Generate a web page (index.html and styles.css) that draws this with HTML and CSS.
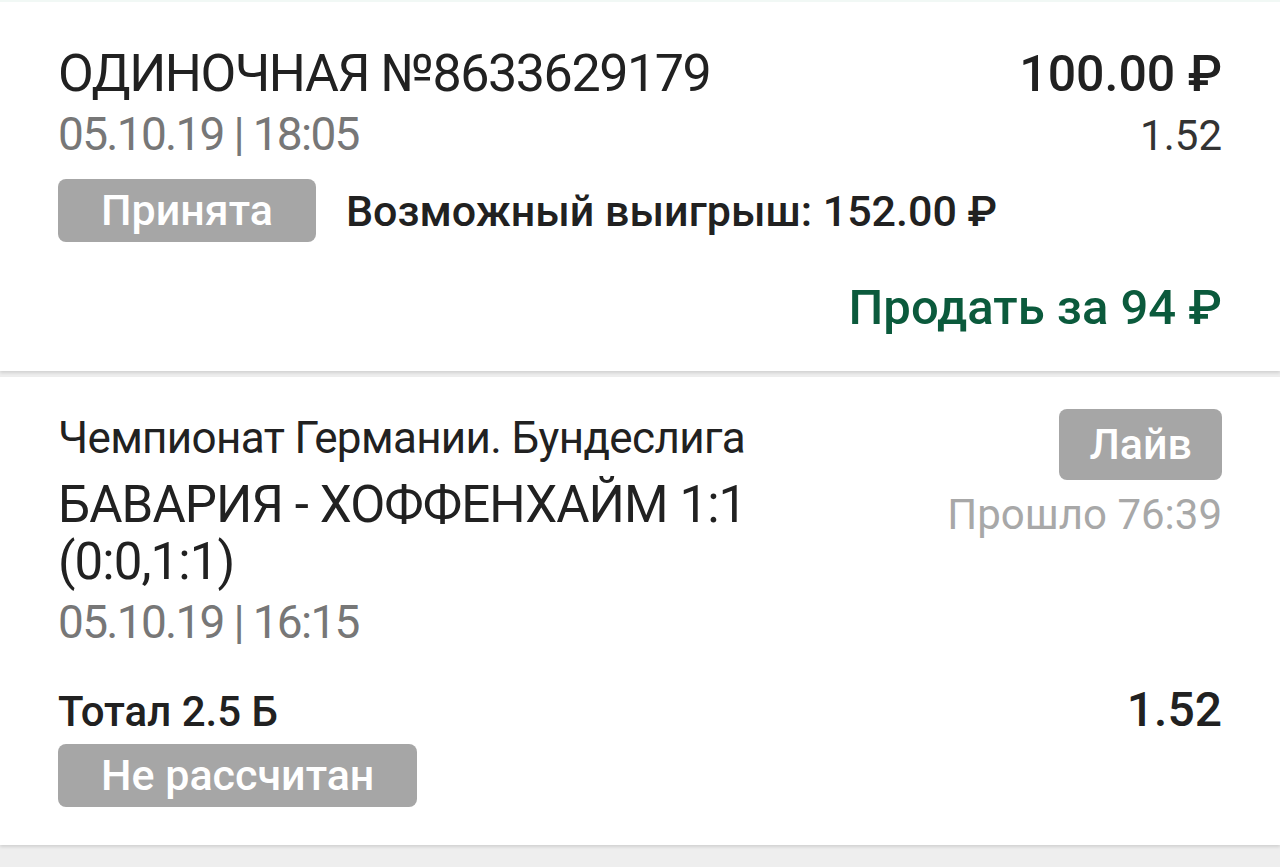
FILE: index.html
```html
<!DOCTYPE html>
<html lang="ru">
<head>
  <meta charset="UTF-8">
  <meta name="viewport" content="width=device-width, initial-scale=1.0">
  <title>Ставка №8633629179</title>
  <link rel="stylesheet" href="styles.css">
</head>
<body>
  <!-- Bet summary -->
  <section class="card bet">
    <div class="row">
      <div class="bet-title">ОДИНОЧНАЯ №8633629179</div>
      <div class="bet-sum">100.00 ₽</div>
    </div>
    <div class="row">
      <div class="date">05.10.19 | 18:05</div>
      <div class="bet-coef">1.52</div>
    </div>
    <div class="status-row">
      <span class="badge">Принята</span>
      <span class="win">Возможный выигрыш: 152.00 ₽</span>
    </div>
    <div class="sell-row">
      <span class="sell">Продать за 94 ₽</span>
    </div>
  </section>

  <!-- Event -->
  <section class="card event">
    <div class="event-head">
      <div class="event-info">
        <div class="league">Чемпионат Германии. Бундеслига</div>
        <div class="match">БАВАРИЯ - ХОФФЕНХАЙМ 1:1<br>(0:0,1:1)</div>
        <div class="date">05.10.19 | 16:15</div>
      </div>
      <div class="event-live">
        <span class="badge badge-live">Лайв</span>
        <div class="elapsed">Прошло 76:39</div>
      </div>
    </div>
    <div class="row outcome-row">
      <div class="outcome">Тотал 2.5 Б</div>
      <div class="outcome-coef">1.52</div>
    </div>
    <span class="badge">Не рассчитан</span>
  </section>
</body>
</html>
```

FILE: styles.css
```css
/* Reset */
body, div, span {
  margin: 0;
  padding: 0;
  box-sizing: border-box;
}

body {
  font-family: Roboto, "Noto Sans", sans-serif;
  background-color: #eeeeee;
  color: #212121;
  min-height: 100vh;
}

/* Cards */
.card {
  display: flex;
  flex-direction: column;
  align-items: flex-start;
  background-color: #ffffff;
  padding: 0 58px;
  box-shadow: 0 2px 3px rgba(0, 0, 0, 0.12);
}

.bet {
  padding-top: 42px;
  padding-bottom: 33px;
  border-top: 2px solid #f1f8f5;
  margin-bottom: 6px;
}

.event {
  padding-top: 30px;
  padding-bottom: 38px;
}

.row {
  display: flex;
  justify-content: space-between;
  align-items: baseline;
  width: 100%;
}

/* Bet summary */
.bet-title {
  font-size: 52px;
  line-height: 60px;
  letter-spacing: -0.028em;
}

.bet-sum {
  font-size: 50px;
  font-weight: 500;
  line-height: 60px;
}

.date {
  font-size: 46px;
  line-height: 60px;
  color: #777777;
  letter-spacing: -0.037em;
}

.bet-coef {
  font-size: 42px;
  line-height: 60px;
  color: #333333;
}

.status-row {
  display: flex;
  align-items: center;
  gap: 30px;
  margin-top: 13px;
}

.badge {
  display: inline-block;
  height: 63px;
  padding: 0 43px;
  background-color: #a6a6a6;
  border-radius: 8px;
  color: #ffffff;
  font-size: 43px;
  font-weight: 500;
  line-height: 63px;
}

.win {
  font-size: 43px;
  font-weight: 500;
}

.sell-row {
  display: flex;
  justify-content: flex-end;
  width: 100%;
  margin-top: 36px;
}

.sell {
  font-size: 49px;
  font-weight: 500;
  line-height: 60px;
  color: #0b5a3c;
}

/* Event */
.event-head {
  display: flex;
  justify-content: space-between;
  width: 100%;
}

.league {
  font-size: 44px;
  line-height: 62px;
  letter-spacing: -0.015em;
}

.match {
  font-size: 51px;
  line-height: 57px;
  margin-top: 7px;
  letter-spacing: -0.018em;
}

.event .date {
  margin-top: 2px;
}

.event-live {
  display: flex;
  flex-direction: column;
  align-items: flex-end;
}

.badge-live {
  height: 71px;
  padding: 0 30px;
  line-height: 71px;
}

.elapsed {
  margin-top: 7px;
  font-size: 42px;
  line-height: 56px;
  color: #a8a8a8;
}

.outcome-row {
  margin-top: 28px;
}

.outcome {
  font-size: 42px;
  font-weight: 500;
  line-height: 60px;
}

.outcome-coef {
  font-size: 48px;
  font-weight: 500;
  line-height: 60px;
}

.event .badge {
  margin-top: 2px;
}
```
